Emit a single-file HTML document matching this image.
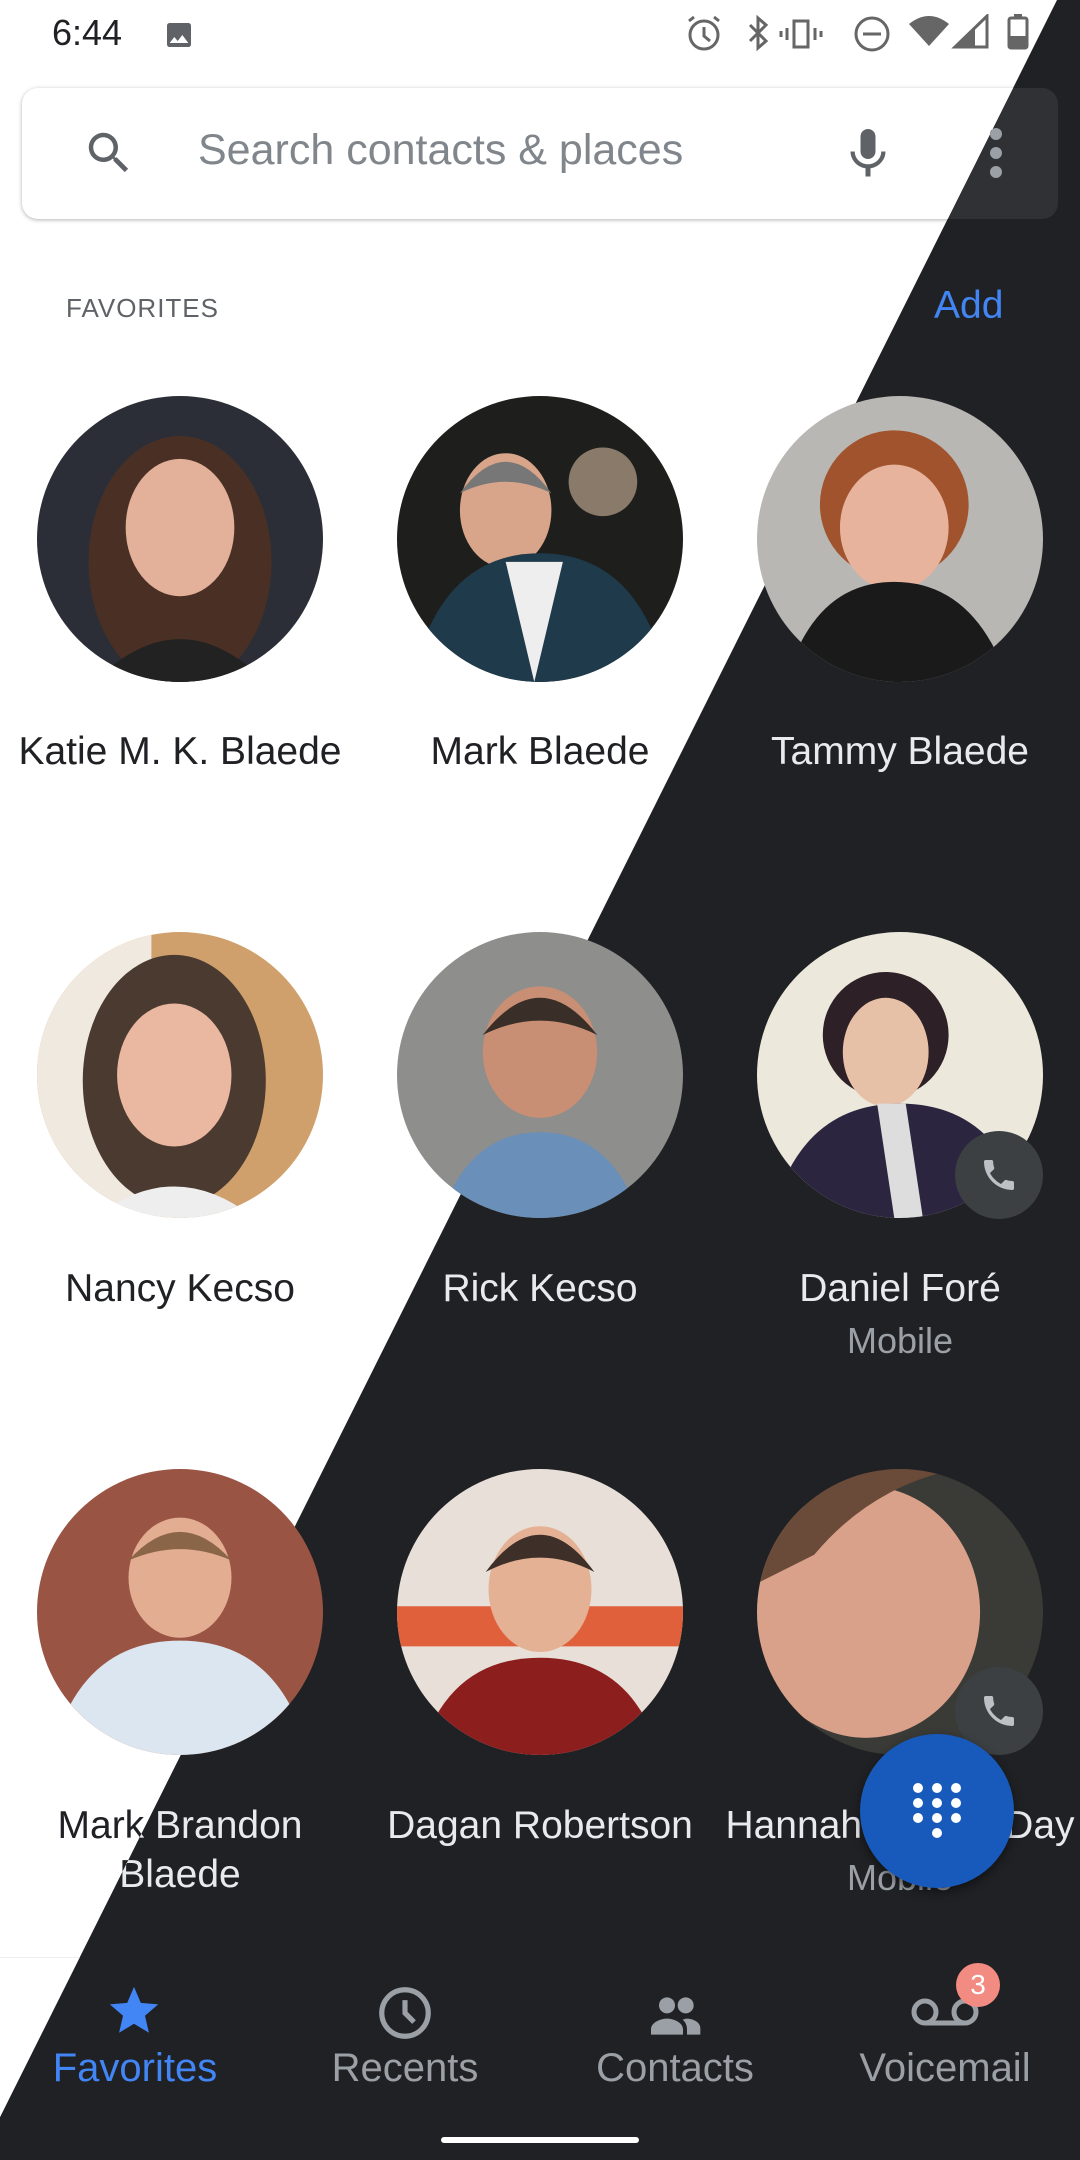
<!DOCTYPE html>
<html><head><meta charset="utf-8"><style>
*{margin:0;padding:0;box-sizing:border-box}
body{width:1080px;height:2160px;overflow:hidden;font-family:"Liberation Sans",sans-serif;position:relative;background:#202124}
.layer{position:absolute;left:0;top:0;width:1080px;height:2160px}
.light{background:#fff;clip-path:polygon(0 0,1057px 0,0 2117px);color:#202124}
.dark{background:#202124;color:#e8eaed}
.time{position:absolute;left:52px;top:12px;font-size:36px}
.search{position:absolute;left:22px;top:88px;width:1036px;height:131px;border-radius:16px}
.light .search{background:#fff;box-shadow:0 1px 4px rgba(0,0,0,.3)}
.dark .search{background:#303134}
.ph{position:absolute;left:176px;top:38px;font-size:43px;color:#80868b}
.fav{position:absolute;left:66px;top:293px;font-size:26px;letter-spacing:1px}
.light .fav{color:#5f6368}.dark .fav{color:#9aa0a6}
.add{position:absolute;left:934px;top:284px;font-size:39px;color:#4285f4}
.name{position:absolute;width:360px;text-align:center;font-size:39px;line-height:49px}
.mob{position:absolute;width:360px;text-align:center;font-size:36px;color:#9aa0a6}
.nav{position:absolute;left:0;top:1957px;width:1080px;height:203px}
.light .nav{background:#fff;border-top:1px solid #eee}
.nl{position:absolute;top:2046px;width:270px;text-align:center;font-size:40px}
.light .nl{color:#5f6368}.dark .nl{color:#9aa0a6}
.nl.act{color:#4285f4!important}
.home{position:absolute;left:441px;top:2137px;width:198px;height:6px;border-radius:3px}
.light .home{background:#202124}.dark .home{background:#fff}
.av{position:absolute;width:286px;height:286px;border-radius:50%;overflow:hidden}
.call{position:absolute;width:88px;height:88px;border-radius:50%;background:#3c4043;display:flex;align-items:center;justify-content:center}
.fab{position:absolute;left:860px;top:1734px;width:154px;height:154px;border-radius:50%;background:#185abc;box-shadow:0 4px 10px rgba(0,0,0,.45)}
</style></head><body>

<div class="layer dark">
 <div class="search">
  <svg style="position:absolute;left:968px;top:38px" width="12" height="56" viewBox="0 0 12 56"><circle cx="6" cy="8" r="6" fill="#9aa0a6"/><circle cx="6" cy="27" r="6" fill="#9aa0a6"/><circle cx="6" cy="46" r="6" fill="#9aa0a6"/></svg>
 </div>
 <div class="add">Add</div>
 <div class="name" style="left:720px;top:727px">Tammy Blaede</div>
 <div class="name" style="left:360px;top:727px">Mark Blaede</div>
 <div class="name" style="left:360px;top:1264px">Rick Kecso</div>
 <div class="name" style="left:720px;top:1264px">Daniel Foré</div>
 <div class="mob" style="left:720px;top:1320px">Mobile</div>
 <div class="name" style="left:0;top:1801px">Mark Brandon<br>Blaede</div>
 <div class="name" style="left:360px;top:1801px">Dagan Robertson</div>
 <div class="name" style="left:720px;top:1801px">Hannah Blaede Day</div>
 <div class="mob" style="left:720px;top:1857px">Mobile</div>
 <div class="nav"></div>
 <div class="nl act" style="left:0">Favorites</div>
 <div class="nl" style="left:270px">Recents</div>
 <div class="nl" style="left:540px">Contacts</div>
 <div class="nl" style="left:810px">Voicemail</div>
 <div class="home"></div>
</div>

<div class="layer light">
 <div class="time">6:44</div>
 <svg style="position:absolute;left:163px;top:19px" width="32" height="32" viewBox="0 0 24 24"><path fill="#5f6368" d="M21 19V5c0-1.1-.9-2-2-2H5c-1.1 0-2 .9-2 2v14c0 1.1.9 2 2 2h14c1.1 0 2-.9 2-2zM8.5 13.5l2.5 3 3.5-4.5 4.5 6H5l3.5-4.5z"/></svg>
 <svg style="position:absolute;left:683px;top:14px" width="380" height="38" viewBox="0 0 380 38">
  <g fill="none" stroke="#666" stroke-width="3">
   <circle cx="21" cy="21" r="14"/><path d="M21 13v9l6 5M6 7l5-4M36 7l-5-4"/>
   <path d="M67 11l16 16-8 7V4l8 7-16 16"/>
   <rect x="111" y="7" width="14" height="26"/><path d="M104 14v12M132 14v12M98 17v6M138 17v6"/>
   <circle cx="189" cy="20" r="16"/><path d="M180 20h18"/>
  </g>
  <path fill="#666" d="M226 10q20-16 40 0l-20 22z"/>
  <path fill="none" stroke="#666" stroke-width="3" d="M272 33l32-31v31z"/><path fill="#666" d="M272 33l20-19v19z"/>
  <rect x="326" y="4" width="18" height="30" rx="2" fill="none" stroke="#666" stroke-width="3"/><rect x="331" y="0" width="8" height="5" fill="#666"/><rect x="326" y="22" width="18" height="12" fill="#666"/>
 </svg>
 <div class="search">
  <svg style="position:absolute;left:60px;top:38px" width="54" height="54" viewBox="0 0 24 24"><path fill="#5f6368" d="M15.5 14h-.79l-.28-.27A6.47 6.47 0 0016 9.5 6.5 6.5 0 109.5 16c1.61 0 3.09-.59 4.23-1.57l.27.28v.79l5 4.99L20.49 19l-4.99-5zm-6 0C7.01 14 5 11.99 5 9.5S7.01 5 9.5 5 14 7.01 14 9.5 11.99 14 9.5 14z"/></svg>
  <div class="ph">Search contacts &amp; places</div>
  <svg style="position:absolute;left:816px;top:36px" width="60" height="60" viewBox="0 0 24 24"><path fill="#5f6368" d="M12 14c1.66 0 3-1.34 3-3V5c0-1.66-1.34-3-3-3S9 3.34 9 5v6c0 1.660 1.34 3 3 3zm5.3-3c0 3-2.54 5.1-5.3 5.1S6.7 14 6.7 11H5c0 3.41 2.72 6.230 6 6.72V21h2v-3.28c3.28-.48 6-3.3 6-6.72h-1.7z"/></svg>
  <svg style="position:absolute;left:968px;top:38px" width="12" height="56" viewBox="0 0 12 56"><circle cx="6" cy="8" r="6" fill="#5f6368"/><circle cx="6" cy="27" r="6" fill="#5f6368"/><circle cx="6" cy="46" r="6" fill="#5f6368"/></svg>
 </div>
 <div class="fav">FAVORITES</div>
 <div class="add">Add</div>
 <div class="name" style="left:0;top:727px">Katie M. K. Blaede</div>
 <div class="name" style="left:360px;top:727px">Mark Blaede</div>
 <div class="name" style="left:720px;top:727px">Tammy Blaede</div>
 <div class="name" style="left:0;top:1264px">Nancy Kecso</div>
 <div class="name" style="left:360px;top:1264px">Rick Kecso</div>
 <div class="name" style="left:0;top:1801px">Mark Brandon<br>Blaede</div>
 <div class="nav"></div>
 <div class="nl act" style="left:0">Favorites</div>
 <div class="nl" style="left:270px">Recents</div>
 <div class="nl" style="left:540px">Contacts</div>
 <div class="home"></div>
</div>

<svg style="position:absolute;left:105px;top:1982px" width="58" height="58" viewBox="0 0 24 24"><path fill="#4285f4" d="M12 17.27L18.18 21l-1.64-7.03L22 9.24l-7.19-.61L12 2 9.19 8.63 2 9.24l5.46 4.730L5.82 21z"/></svg>
<svg style="position:absolute;left:374px;top:1982px" width="62" height="62" viewBox="0 0 24 24"><circle cx="12" cy="12" r="9" fill="none" stroke="#9aa0a6" stroke-width="2"/><path d="M12 7v5l3.5 3.5" fill="none" stroke="#9aa0a6" stroke-width="2"/></svg>
<svg style="position:absolute;left:643px;top:1984px" width="64" height="64" viewBox="0 0 24 24"><circle cx="9" cy="8" r="3" fill="#9aa0a6"/><circle cx="16" cy="8" r="3" fill="#9aa0a6"/><path fill="#9aa0a6" d="M3 19v-2c0-2.5 3.5-4 6-4s6 1.5 6 4v2zM16.5 13c2 0 5 1.2 5 3.5V19H16.5v-2c0-1.5-.6-2.8-1.6-3.6.5-.2 1.1-.4 1.6-.4z"/></svg>
<svg style="position:absolute;left:910px;top:1992px" width="70" height="40" viewBox="0 0 70 40"><g fill="none" stroke="#9aa0a6" stroke-width="5"><circle cx="15" cy="20" r="11"/><circle cx="55" cy="20" r="11"/><path d="M15 31h40"/></g></svg>
<div style="position:absolute;left:956px;top:1963px;width:44px;height:44px;border-radius:50%;background:#f28b82;color:#fff;font-size:28px;text-align:center;line-height:44px">3</div>

<div class="av" style="left:37px;top:396px"><svg width="286" height="286" viewBox="0 0 100 100"><rect width="100" height="100" fill="#2b2e36"/><ellipse cx="50" cy="58" rx="32" ry="44" fill="#4a3024"/><ellipse cx="50" cy="46" rx="19" ry="24" fill="#e3b09a"/><path d="M20 100q30-30 60 0z" fill="#222"/></svg></div>
<div class="av" style="left:397px;top:396px"><svg width="286" height="286" viewBox="0 0 100 100"><rect width="100" height="100" fill="#1e1f1c"/><circle cx="72" cy="30" r="12" fill="#8a7a6a"/><ellipse cx="38" cy="40" rx="16" ry="20" fill="#d9a58a"/><path d="M22 34q16-22 32 0q-16-8-32 0z" fill="#777"/><path d="M5 100q10-45 45-45t45 45z" fill="#1f3a4a"/><path d="M38 58l10 42 10-42z" fill="#eee"/></svg></div>
<div class="av" style="left:757px;top:396px"><svg width="286" height="286" viewBox="0 0 100 100"><rect width="100" height="100" fill="#b9b7b3"/><ellipse cx="48" cy="38" rx="26" ry="26" fill="#a0532d"/><ellipse cx="48" cy="46" rx="19" ry="22" fill="#e7b39d"/><path d="M10 100q10-35 38-35t40 35z" fill="#1a1a1a"/></svg></div>
<div class="av" style="left:37px;top:932px"><svg width="286" height="286" viewBox="0 0 100 100"><rect width="100" height="100" fill="#cfa06c"/><rect width="40" height="100" fill="#f0e9e0"/><ellipse cx="48" cy="52" rx="32" ry="44" fill="#4b3a30"/><ellipse cx="48" cy="50" rx="20" ry="25" fill="#eab8a0"/><path d="M20 100q28-22 56 0z" fill="#eee"/></svg></div>
<div class="av" style="left:397px;top:932px"><svg width="286" height="286" viewBox="0 0 100 100"><rect width="100" height="100" fill="#8e8e8c"/><ellipse cx="50" cy="42" rx="20" ry="23" fill="#c98f74"/><path d="M30 36q20-26 40 0q-20-10-40 0z" fill="#3a2e28"/><path d="M15 100q10-30 35-30t35 30z" fill="#6a8fb9"/></svg></div>
<div class="av" style="left:757px;top:932px"><svg width="286" height="286" viewBox="0 0 100 100"><rect width="100" height="100" fill="#ece8dc"/><ellipse cx="45" cy="36" rx="22" ry="22" fill="#2d2026"/><ellipse cx="45" cy="42" rx="15" ry="19" fill="#e7c0a8"/><path d="M5 100q10-40 45-40t45 40z" fill="#2c2540"/><path d="M42 60l6 40h10l-6-40z" fill="#ddd"/></svg></div>
<div class="av" style="left:37px;top:1469px"><svg width="286" height="286" viewBox="0 0 100 100"><rect width="100" height="100" fill="#9a5444"/><ellipse cx="50" cy="38" rx="18" ry="21" fill="#e3ad92"/><path d="M32 32q18-20 36 0q-18-8-36 0z" fill="#8a6547"/><path d="M5 100q10-40 45-40t45 40z" fill="#dbe6f0"/></svg></div>
<div class="av" style="left:397px;top:1469px"><svg width="286" height="286" viewBox="0 0 100 100"><rect width="100" height="100" fill="#e8e0d8"/><path d="M0 48h100v14H0z" fill="#e0603c"/><ellipse cx="50" cy="42" rx="18" ry="22" fill="#e4b195"/><path d="M31 36q19-26 38 0q-19-10-38 0z" fill="#3e3028"/><path d="M8 100q10-34 42-34t42 34z" fill="#8d1e1e"/></svg></div>
<div class="av" style="left:757px;top:1469px"><svg width="286" height="286" viewBox="0 0 100 100"><rect width="100" height="100" fill="#3a3a36"/><ellipse cx="38" cy="50" rx="40" ry="44" fill="#d9a08a"/><path d="M0 0h70q-30 6-50 30L0 40z" fill="#6a4a38"/></svg></div>

<div class="call" style="left:955px;top:1131px"><svg width="40" height="40" viewBox="0 0 24 24"><path fill="#bdc1c6" d="M6.6 10.8c1.4 2.8 3.8 5.1 6.6 6.6l2.2-2.2c.3-.3.7-.4 1-.2 1.1.4 2.3.6 3.6.6.6 0 1 .4 1 1V20c0 .6-.4 1-1 1C10.6 21 3 13.4 3 4c0-.6.4-1 1-1h3.5c.6 0 1 .4 1 1 0 1.3.2 2.5.6 3.6.1.3 0 .7-.2 1z"/></svg></div>
<div class="call" style="left:955px;top:1667px"><svg width="40" height="40" viewBox="0 0 24 24"><path fill="#bdc1c6" d="M6.6 10.8c1.4 2.8 3.8 5.1 6.6 6.6l2.2-2.2c.3-.3.7-.4 1-.2 1.1.4 2.3.6 3.6.6.6 0 1 .4 1 1V20c0 .6-.4 1-1 1C10.6 21 3 13.4 3 4c0-.6.4-1 1-1h3.5c.6 0 1 .4 1 1 0 1.3.2 2.5.6 3.6.1.3 0 .7-.2 1z"/></svg></div>

<div class="fab"><svg style="position:absolute;left:50px;top:47px" width="54" height="60" viewBox="0 0 54 60"><g fill="#fff"><circle cx="8" cy="7" r="5"/><circle cx="27" cy="7" r="5"/><circle cx="46" cy="7" r="5"/><circle cx="8" cy="22" r="5"/><circle cx="27" cy="22" r="5"/><circle cx="46" cy="22" r="5"/><circle cx="8" cy="37" r="5"/><circle cx="27" cy="37" r="5"/><circle cx="46" cy="37" r="5"/><circle cx="27" cy="52" r="5"/></g></svg></div>
</body></html>
